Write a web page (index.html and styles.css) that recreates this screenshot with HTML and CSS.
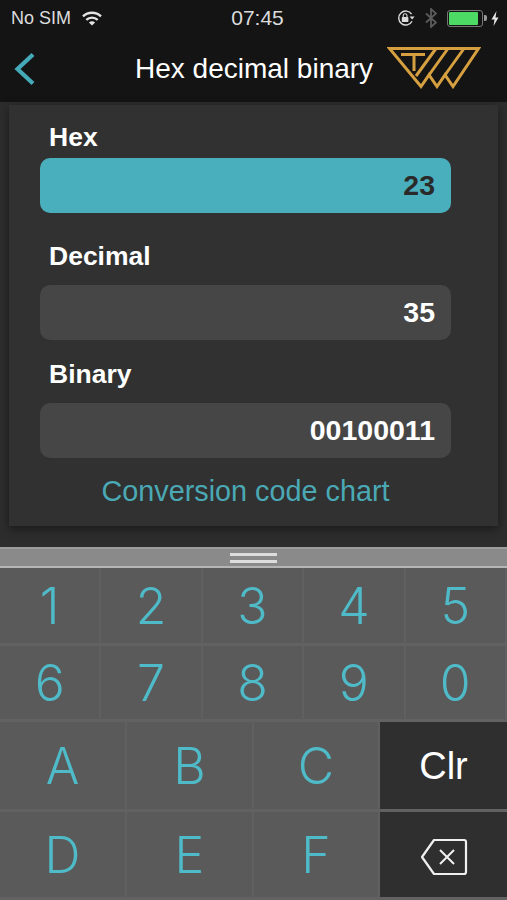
FILE: index.html
```html
<!DOCTYPE html>
<html lang="en">
<head>
    <meta charset="UTF-8">
    <meta name="viewport" content="width=device-width, initial-scale=1.0">
    <title>Hex decimal binary</title>
    <link rel="stylesheet" href="styles.css">
</head>
<body>
    <div class="app">
        <header class="top">
            <div class="status">
                <div class="status-left">
                    <span>No SIM</span>
                    <svg class="wifi" width="20" height="15" viewBox="0 0 20 15">
                        <path d="M1 5.4C6 .6 14 .6 19 5.4" fill="none" stroke="#e4e4e4" stroke-width="2.4"/>
                        <path d="M4.3 8.9c3.3-3 8.1-3 11.4 0" fill="none" stroke="#e4e4e4" stroke-width="2.4"/>
                        <path d="M6.9 11.4c1.8-1.5 4.4-1.5 6.2 0L10 14.6z" fill="#e4e4e4"/>
                    </svg>
                </div>
                <div class="status-time">07:45</div>
                <div class="status-right">
                    <svg width="18" height="16" viewBox="0 0 18 16">
                        <path d="M15 11.2A7 7 0 1 1 14.6 4.2" fill="none" stroke="#dcdcdc" stroke-width="1.4"/>
                        <path d="M17.6 6.6h-5l2.5 3z" fill="#dcdcdc"/>
                        <rect x="4.8" y="7" width="6.6" height="5" rx=".8" fill="#dcdcdc"/>
                        <path d="M6.2 7V5.6a1.9 1.9 0 0 1 3.8 0V7" fill="none" stroke="#dcdcdc" stroke-width="1.1"/>
                    </svg>
                    <svg class="bt" width="12" height="20" viewBox="0 0 12 20">
                        <path d="M1 5.5l10 9-5 4.5V1l5 4.5-10 9" fill="none" stroke="#5c5c5c" stroke-width="1.8"/>
                    </svg>
                    <div class="battery-wrap">
                        <div class="battery"><div class="battery-fill"></div></div>
                        <div class="battery-nub"></div>
                    </div>
                    <svg width="8" height="15" viewBox="0 0 8 15">
                        <path d="M5.5 0L0.5 8.5h3L2.5 15l5-8.5h-3z" fill="#e6e6e6"/>
                    </svg>
                </div>
            </div>
            <div class="nav">
                <svg class="back" width="24" height="36" viewBox="0 0 24 36">
                    <path d="M19 3.5L3.5 18 19 32.5" fill="none" stroke="#45aab8" stroke-width="4.2"/>
                </svg>
                <h1>Hex decimal binary</h1>
                <svg class="logo" width="94" height="42" viewBox="0 0 94 42">
                    <g fill="none" stroke="#d6a040" stroke-width="3">
                        <path d="M2.5 1.5H91.5L66 39.5 58 28 50 39.5 42 28 34 39.5z"/>
                        <path d="M42 28L61 1.5M58 28L77 1.5M29 29L49 1.5"/>
                        <path d="M14 7.5H38M27 7.5V24"/>
                    </g>
                </svg>
            </div>
        </header>

        <main class="content">
            <section class="card">
                <div class="field field-hex">
                    <label>Hex</label>
                    <div class="value active">23</div>
                </div>
                <div class="field field-decimal">
                    <label>Decimal</label>
                    <div class="value">35</div>
                </div>
                <div class="field">
                    <label>Binary</label>
                    <div class="value">00100011</div>
                </div>
                <a class="chart-link">Conversion code chart</a>
            </section>
        </main>

        <div class="handle">
            <div class="grip"></div>
        </div>

        <div class="keys-top">
            <button>1</button><button>2</button><button>3</button><button>4</button><button>5</button>
            <button>6</button><button>7</button><button>8</button><button>9</button><button>0</button>
        </div>
        <div class="keys-bottom">
            <button>A</button><button>B</button><button>C</button><button class="dark">Clr</button>
            <button>D</button><button>E</button><button>F</button>
            <button class="dark backspace">
                <svg width="48" height="38" viewBox="0 0 48 38">
                    <path d="M14 2h30a2 2 0 0 1 2 2v30a2 2 0 0 1-2 2H14L2 19z" fill="none" stroke="#f0f0f0" stroke-width="2.2" stroke-linejoin="round"/>
                    <path d="M20 12l14 14M34 12L20 26" stroke="#f0f0f0" stroke-width="2" fill="none"/>
                </svg>
            </button>
        </div>
    </div>
</body>
</html>
```

FILE: styles.css
```css
* {
    margin: 0;
    padding: 0;
    box-sizing: border-box;
}

body {
    font-family: "Liberation Sans", Arial, sans-serif;
    background-color: #2d2d2d;
    width: 507px;
    height: 900px;
    overflow: hidden;
}

.app {
    width: 507px;
    height: 900px;
    display: flex;
    flex-direction: column;
}

.top {
    height: 102px;
    background-color: #141414;
    color: #fff;
}

.status {
    height: 36px;
    padding: 0 8px 0 11px;
    display: flex;
    align-items: center;
    justify-content: space-between;
    font-size: 18px;
    color: #dcdcdc;
}

.status-left {
    display: flex;
    align-items: center;
    gap: 11px;
    width: 175px;
}

.status-time {
    font-size: 21px;
}

.status-right {
    width: 170px;
    display: flex;
    align-items: center;
    justify-content: flex-end;
    gap: 10px;
}

.battery-wrap {
    display: flex;
    align-items: center;
    margin-right: -6px;
}

.battery {
    width: 36px;
    height: 17px;
    border: 1px solid #777;
    border-radius: 3px;
    padding: 1px 4px 1px 1px;
}

.battery-fill {
    height: 100%;
    background-color: #4cd964;
    border-radius: 1px;
}

.battery-nub {
    width: 3px;
    height: 6px;
    margin-left: 1px;
    background-color: #999;
    border-radius: 0 2px 2px 0;
}

.nav {
    height: 66px;
    padding: 0 26px 0 14px;
    display: flex;
    align-items: center;
    justify-content: space-between;
}

.nav h1 {
    font-size: 28px;
    font-weight: normal;
    margin-left: 97px;
    flex: 1;
    white-space: nowrap;
    color: #fff;
}

.back {
    flex-shrink: 0;
}

.logo {
    flex-shrink: 0;
    margin-bottom: 3px;
}

.content {
    height: 445px;
    padding: 3px 9px 0;
}

.card {
    background-color: #313131;
    height: 421px;
    padding: 17px 47px 0 31px;
    box-shadow: 0 3px 10px rgba(0, 0, 0, 0.45);
}

.field {
    margin-bottom: 19px;
}

.field-hex {
    margin-bottom: 28px;
}

.field label {
    display: block;
    font-size: 26.5px;
    font-weight: bold;
    color: #fff;
    padding-left: 9px;
    line-height: 30px;
    margin-bottom: 14px;
}

.field-hex label {
    margin-bottom: 6px;
}

.value {
    height: 55px;
    background-color: #464646;
    border-radius: 10px;
    color: #fff;
    font-size: 28.5px;
    font-weight: bold;
    text-align: right;
    line-height: 55px;
    padding-right: 16px;
}

.value.active {
    background-color: #4aafbc;
    color: #2a2a2a;
}

.chart-link {
    display: block;
    text-align: center;
    color: #4aa9b5;
    font-size: 28.8px;
    margin-top: -2px;
}

.handle {
    height: 21px;
    background-color: #8a8a8a;
    border-top: 2px solid #9c9c9c;
    border-bottom: 2px solid #b5b5b5;
    display: flex;
    align-items: center;
    justify-content: center;
}

.grip {
    width: 47px;
    height: 10px;
    border-top: 3px solid #ddd;
    border-bottom: 3px solid #ddd;
}

.keys-top {
    height: 154px;
    display: grid;
    grid-template-columns: repeat(5, 1fr);
    grid-template-rows: 78px 76px;
    background-color: #5a5a5a;
}

.keys-top button,
.keys-bottom button {
    background-color: #5a5a5a;
    border: none;
    border-right: 2px solid #606060;
    border-bottom: 3px solid #626262;
    color: #4fbac8;
    font-family: Inter, "Liberation Sans", Arial, sans-serif;
    font-weight: 300;
    display: flex;
    align-items: center;
    justify-content: center;
}

.keys-top button {
    font-size: 50px;
}

.keys-bottom {
    height: 178px;
    display: grid;
    grid-template-columns: 127px 127px 126px 127px;
    grid-template-rows: 90px 88px;
}

.keys-bottom button {
    font-size: 50px;
}

.keys-bottom button.dark {
    background-color: #2f2f2f;
    border-right: none;
    color: #fff;
    font-family: "Liberation Sans", Arial, sans-serif;
    font-size: 38px;
    padding-top: 2px;
}

.keys-bottom button.backspace {
    padding-top: 4px;
}
```
